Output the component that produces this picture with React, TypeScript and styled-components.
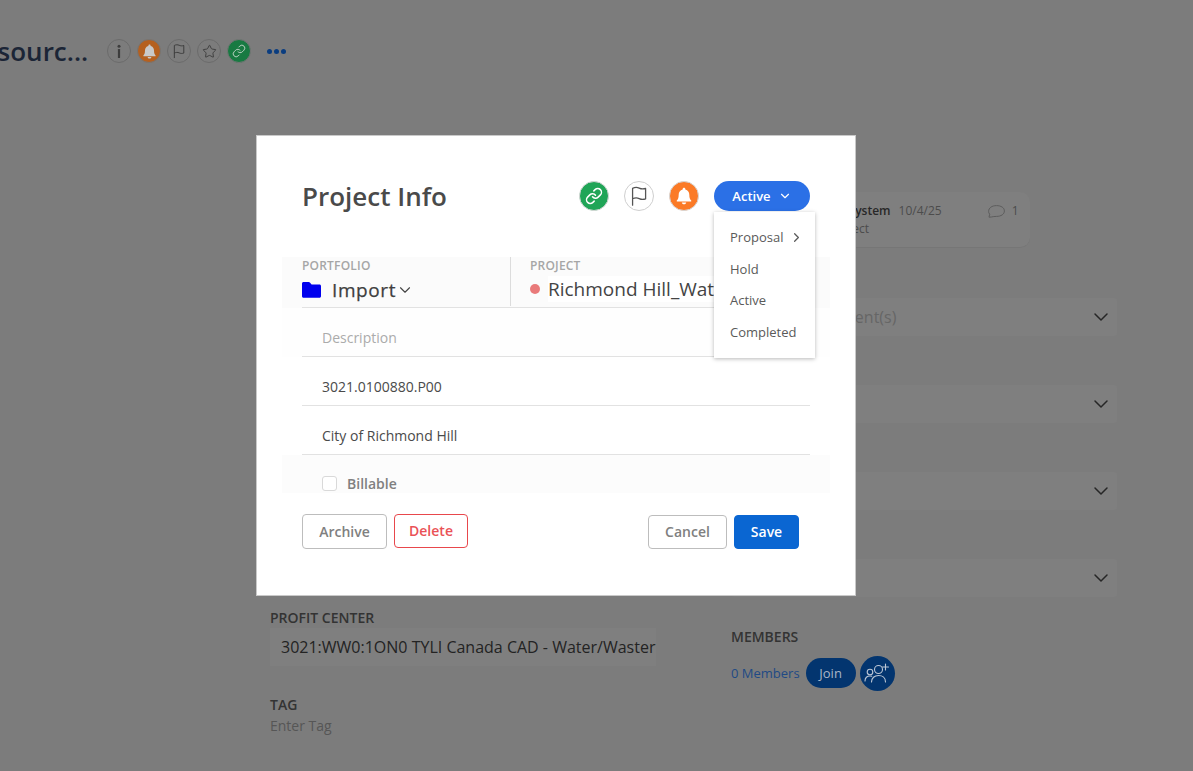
import React from "react";
import styled, { createGlobalStyle } from "styled-components";
import { ChevronDown, ChevronRight, Link as LinkIcon, Star } from "lucide-react";

const Global = createGlobalStyle`
  html, body { margin: 0; padding: 0; height: 100%; }
  body { font-family: "Open Sans", "Liberation Sans", sans-serif; background: #7c7c7c; overflow: hidden; }
  * { box-sizing: border-box; }
`;

const Page = styled.div`
  position: relative;
  width: 1193px;
  height: 771px;
  overflow: hidden;
  background: #7c7c7c;
`;

/* ---------- dimmed page behind the dialog ---------- */
const Header = styled.header`
  height: 102px;
  display: flex;
  align-items: center;
  gap: 6px;
`;
const PageTitle = styled.h1`
  margin: 0 13px 0 -34px;
  font-size: 26px;
  font-weight: 600;
  color: #1b2536;
  white-space: nowrap;
`;
const HeadIcon = styled.span<{ $bg?: string; $fg?: string }>`
  width: 24px;
  height: 24px;
  border-radius: 50%;
  display: flex;
  align-items: center;
  justify-content: center;
  background: ${(p) => p.$bg ?? "transparent"};
  border: 1px solid ${(p) => (p.$bg ? "#757575" : "#6b6b6b")};
  color: ${(p) => p.$fg ?? "#3d3d3d"};
  flex: none;
`;
const Dots = styled.span`
  display: flex;
  gap: 2px;
  margin-left: 10px;
  & i { width: 5px; height: 5px; border-radius: 50%; background: #0a3d80; display: block; }
`;
const Columns = styled.main`
  display: flex;
  gap: 75px;
  padding-left: 270px;
`;
const LeftCol = styled.section`
  width: 386px;
  padding-top: 507px;
`;
const RightCol = styled.section`
  width: 386px;
  padding-top: 90px;
`;
const FieldLabel = styled.div`
  font-size: 14px;
  line-height: 18px;
  font-weight: 600;
  color: #333;
`;
const ValueBox = styled.div`
  margin-top: 1px;
  height: 38px;
  padding: 0 1px 0 11px;
  background: #7f7f7f;
  color: #232323;
  font-size: 16px;
  line-height: 38px;
  white-space: nowrap;
  overflow: hidden;
`;
const TagLabel = styled(FieldLabel)`
  margin-top: 30px;
`;
const TagHint = styled.div`
  margin-top: 1px;
  font-size: 14px;
  line-height: 22px;
  color: #565656;
`;
const ActivityCard = styled.div`
  width: 299px;
  height: 56px;
  border-radius: 10px;
  background: #7f7f7f;
  border-bottom: 1px solid #767676;
  padding: 10px 0 0 99px;
  font-size: 12px;
  color: #4c4c4c;
`;
const CardTop = styled.div`
  display: flex;
  align-items: center;
  line-height: 18px;
  white-space: nowrap;
`;
const CardName = styled.b`
  font-weight: 600;
  color: #282828;
  margin: 0 8px 0 5px;
`;
const CommentCount = styled.span`
  margin-left: 46px;
  display: flex;
  align-items: center;
  gap: 7px;
`;
const CardBottom = styled.div`
  font-size: 12px;
  line-height: 18px;
`;
const Collapse = styled.div<{ $top: number }>`
  margin-top: ${(p) => p.$top}px;
  height: 38px;
  background: #7f7f7f;
  border-radius: 3px;
  padding: 0 4px 0 22px;
  display: flex;
  align-items: center;
  justify-content: space-between;
  font-size: 16px;
  color: #666;
  & svg { color: #262626; }
`;
const MembersBlock = styled.div`
  margin-top: 31px;
`;
const MembersRow = styled.div`
  margin-top: 9px;
  display: flex;
  align-items: center;
  height: 36px;
`;
const MembersLink = styled.span`
  font-size: 13px;
  color: #1f4a85;
  margin-right: 6px;
`;
const JoinPill = styled.span`
  width: 50px;
  height: 30px;
  border-radius: 15px;
  background: #03356f;
  color: #a9b6c8;
  font-size: 13px;
  display: flex;
  align-items: center;
  justify-content: center;
  margin-right: 4px;
`;
const AddMember = styled.span`
  width: 35px;
  height: 35px;
  border-radius: 50%;
  background: #03356f;
  color: #bcc7d6;
  display: flex;
  align-items: center;
  justify-content: center;
`;

/* ---------- dialog ---------- */
const Dialog = styled.div`
  position: absolute;
  left: 256px;
  top: 135px;
  width: 600px;
  height: 461px;
  background: #fff;
  border: 1px solid #c9c9c9;
  padding: 44px 0 0 0;
  display: flex;
  flex-direction: column;
`;
const DialogHead = styled.div`
  display: flex;
  align-items: center;
  height: 32px;
  padding: 0 45px;
`;
const DialogTitle = styled.h2`
  margin: 0 auto 0 0;
  font-size: 26px;
  font-weight: 600;
  color: #4a4a4a;
`;
const RoundIcon = styled.span<{ $bg?: string }>`
  width: 30px;
  height: 30px;
  border-radius: 50%;
  margin-right: 15px;
  background: ${(p) => p.$bg ?? "#fff"};
  border: 1px solid ${(p) => (p.$bg ? "#d6d6d6" : "#cfcfcf")};
  color: ${(p) => (p.$bg ? "#fff" : "#555")};
  display: flex;
  align-items: center;
  justify-content: center;
  flex: none;
`;
const StatusPill = styled.span`
  position: relative;
  width: 96px;
  height: 30px;
  border-radius: 15px;
  background: #2b70e6;
  color: #fff;
  font-size: 13px;
  font-weight: 600;
  display: flex;
  align-items: center;
  justify-content: center;
  gap: 7px;
`;
const StatusMenu = styled.ul`
  position: absolute;
  top: 31px;
  left: 0;
  width: 101px;
  height: 146px;
  margin: 0;
  padding: 9.4px 0 0 16px;
  list-style: none;
  background: #fff;
  box-shadow: 0 1px 4px rgba(0, 0, 0, 0.28);
  z-index: 3;
`;
const MenuItem = styled.li`
  height: 31.6px;
  display: flex;
  align-items: center;
  gap: 6px;
  font-size: 13px;
  font-weight: 400;
  color: #5a5a5a;
  white-space: nowrap;
`;
const FormBody = styled.div`
  margin-top: 45px;
  margin-left: 25px;
  width: 548px;
  height: 236px;
  overflow: hidden;
  display: flex;
  flex-direction: column;
`;
const Band = styled.div<{ $tint: string }>`
  background: ${(p) => p.$tint};
  padding: 0 20px;
`;
const SplitRow = styled.div`
  height: 51px;
  display: flex;
  border-bottom: 1px solid #e2e2e2;
`;
const SplitCell = styled.div<{ $w?: number; $divided?: boolean }>`
  flex: ${(p) => (p.$w ? `0 0 ${p.$w}px` : "1")};
  min-width: 0;
  overflow: hidden;
  padding-left: ${(p) => (p.$divided ? "19px" : "0")};
  border-right: ${(p) => (p.$divided ? "none" : "1px solid #dcdcdc")};
  margin-bottom: 1px;
`;
const MiniLabel = styled.div`
  font-size: 12px;
  line-height: 18px;
  font-weight: 600;
  color: #a6a6a6;
  letter-spacing: 0.2px;
`;
const PortfolioValue = styled.div`
  display: flex;
  align-items: center;
  height: 30px;
  font-size: 19px;
  font-weight: 400;
  letter-spacing: 0.6px;
  -webkit-text-stroke: 0.25px #3f3f3f;
  color: #3f3f3f;
  & svg.caret { color: #444; margin-left: 0; }
`;
const ProjectValue = styled.div`
  display: flex;
  align-items: center;
  height: 28px;
  font-size: 19px;
  color: #444;
  white-space: nowrap;
`;
const StatusDot = styled.span`
  width: 10px;
  height: 10px;
  border-radius: 50%;
  margin: 0 8px 0 0;
  background: #e97a7a;
  flex: none;
`;
const ProjectName = styled.span`
  background: #fff;
`;
const TextRow = styled.div<{ $muted?: boolean }>`
  height: 49px;
  padding: 10px 0 0 20px;
  display: flex;
  align-items: center;
  border-bottom: 1px solid #e2e2e2;
  font-size: 14px;
  color: ${(p) => (p.$muted ? "#ababab" : "#4a4a4a")};
`;
const CheckRow = styled.div`
  height: 38px;
  padding-left: 20px;
  display: flex;
  align-items: flex-end;
  gap: 10px;
  font-size: 14px;
  font-weight: 600;
  color: #808080;
`;
const CheckBox = styled.span`
  width: 15px;
  height: 15px;
  margin-bottom: 2px;
  background: #fff;
  border: 1px solid #d9d9d9;
  border-radius: 3px;
`;
const Footer = styled.div`
  margin-top: 21px;
  padding: 0 56px 0 45px;
  display: flex;
  align-items: flex-start;
  gap: 7px;
`;
const Btn = styled.span<{ $w: number; $kind?: "danger" | "primary" | "cancel" }>`
  width: ${(p) => p.$w}px;
  height: ${(p) => (p.$kind ? 34 : 35)}px;
  margin-top: ${(p) => (p.$kind === "primary" || p.$kind === "cancel" ? 1 : 0)}px;
  padding-bottom: ${(p) => (p.$kind ? 1 : 0)}px;
  border-radius: 4px;
  display: flex;
  align-items: center;
  justify-content: center;
  font-size: 14px;
  font-weight: 600;
  border: 1px solid
    ${(p) => (p.$kind === "danger" ? "#e8474c" : p.$kind === "primary" ? "#0a66d2" : "#bdbdbd")};
  background: ${(p) => (p.$kind === "primary" ? "#0a66d2" : "#fff")};
  color: ${(p) => (p.$kind === "danger" ? "#ea5257" : p.$kind === "primary" ? "#fff" : "#808080")};
`;
const FooterGap = styled.span`
  flex: 1;
`;

const BellGlyph = ({ size }: { size: number }) => (
  <svg width={size} height={size} viewBox="0 0 24 24" fill="currentColor">
    <path d="M12 2.2c-.9 0-1.6.7-1.6 1.6v.5C7.3 5 5.6 7.7 5.6 10.8c0 3.3-.6 4.9-2.2 6.7-.4.5-.1 1.2.6 1.2h16c.7 0 1-.7.6-1.2-1.6-1.8-2.2-3.4-2.2-6.7 0-3.1-1.7-5.8-4.8-6.5v-.5c0-.9-.7-1.6-1.6-1.6z" />
    <path d="M9.4 19.800h5.200c0 1.300-1.200 2.200-2.600 2.200s-2.600-.9-2.600-2.200z" />
  </svg>
);
const FlagGlyph = ({ size, weight }: { size: number; weight: number }) => (
  <svg width={size} height={size} viewBox="0 0 24 24" fill="none" stroke="currentColor" strokeWidth={weight} strokeLinejoin="round" strokeLinecap="round">
    <path d="M5 22V3.600c2.600-1.200 5-1.200 7.200-.2 2.200 1 4.400 1.200 7 .3v11.400c-2.600.9-4.800.7-7-.3-2.200-1-4.600-1-7.200.2" />
  </svg>
);
const InfoGlyph = () => (
  <svg width="16" height="16" viewBox="0 0 16 16" fill="currentColor">
    <circle cx="8" cy="3.200" r="1.500" />
    <rect x="6.900" y="6" width="2.200" height="9" rx="0.500" />
  </svg>
);
const FolderGlyph = () => (
  <svg width="19" height="16" viewBox="0 0 19 16" fill="#0000ee" style={{ marginRight: 11, flex: "none" }}>
    <path d="M1.500 0h5.200c.5 0 .9.2 1.200.5L9.600 2.400h7.900c.8 0 1.500.7 1.500 1.500v10.400c0 .8-.7 1.500-1.500 1.500h-16C.7 15.800 0 15.100 0 14.300V1.500C0 .7.700 0 1.500 0z" />
  </svg>
);
const BubbleGlyph = () => (
  <svg width="17" height="13" viewBox="0 0 17 13" fill="none" stroke="#5d5d5d" strokeWidth="1">
    <path d="M1 12.200l.7-3C.9 8.300.6 7.400.6 6.400.6 3 3.800.6 8.500.6c4.600 0 7.900 2.200 7.900 5.300 0 3.300-3.300 5.500-7.900 5.500-1.800 0-3.600.2-5.200.6z" />
  </svg>
);
const UsersPlus = () => (
  <svg width="26" height="24" viewBox="0 0 26 24" fill="none" stroke="currentColor" strokeWidth="1.100" strokeLinecap="round">
    <circle cx="14.500" cy="8.500" r="4" />
    <path d="M7.500 21c0-4 3-6.500 7-6.500s7 2.500 7 6.500" />
    <circle cx="6" cy="11" r="2.800" />
    <path d="M1 20c0-3.300 2-5 5-5 .6 0 1.200.1 1.700.3" />
    <path d="M21.500 3v6M18.500 6h6" />
  </svg>
);

export default function App() {
  return (
    <Page>
      <Global />
      <Header>
        <PageTitle>Resourc...</PageTitle>
        <HeadIcon><InfoGlyph /></HeadIcon>
        <HeadIcon $bg="#b5601f" $fg="#c9c9c9"><BellGlyph size={17} /></HeadIcon>
        <HeadIcon><FlagGlyph size={16} weight={1.500} /></HeadIcon>
        <HeadIcon><Star size={15} strokeWidth={1.500} /></HeadIcon>
        <HeadIcon $bg="#187a42" $fg="#b9cfc0"><LinkIcon size={14} strokeWidth={1.700} /></HeadIcon>
        <Dots><i /><i /><i /></Dots>
      </Header>
      <Columns>
        <LeftCol>
          <FieldLabel>PROFIT CENTER</FieldLabel>
          <ValueBox>3021:WW0:1ON0 TYLI Canada CAD - Water/Waster</ValueBox>
          <TagLabel>TAG</TagLabel>
          <TagHint>Enter Tag</TagHint>
        </LeftCol>
        <RightCol>
          <ActivityCard>
            <CardTop>
              <CardName>IT System</CardName>
              <span>10/4/25</span>
              <CommentCount><BubbleGlyph /> 1</CommentCount>
            </CardTop>
            <CardBottom>Project</CardBottom>
          </ActivityCard>
          <Collapse $top={50}>Select Document(s)<ChevronDown size={24} strokeWidth={1.500} /></Collapse>
          <Collapse $top={49}><span /><ChevronDown size={24} strokeWidth={1.500} /></Collapse>
          <Collapse $top={49}><span /><ChevronDown size={24} strokeWidth={1.500} /></Collapse>
          <Collapse $top={49}><span /><ChevronDown size={24} strokeWidth={1.500} /></Collapse>
          <MembersBlock>
            <FieldLabel>MEMBERS</FieldLabel>
            <MembersRow>
              <MembersLink>0 Members</MembersLink>
              <JoinPill>Join</JoinPill>
              <AddMember><UsersPlus /></AddMember>
            </MembersRow>
          </MembersBlock>
        </RightCol>
      </Columns>

      <Dialog>
        <DialogHead>
          <DialogTitle>Project Info</DialogTitle>
          <RoundIcon $bg="#20a557"><LinkIcon size={18} strokeWidth={2} /></RoundIcon>
          <RoundIcon><FlagGlyph size={22} weight={1.400} /></RoundIcon>
          <RoundIcon $bg="#fb7a26"><BellGlyph size={20} /></RoundIcon>
          <StatusPill>
            Active <ChevronDown size={14} />
            <StatusMenu>
              <MenuItem>Proposal <ChevronRight size={15} /></MenuItem>
              <MenuItem>Hold</MenuItem>
              <MenuItem>Active</MenuItem>
              <MenuItem>Completed</MenuItem>
            </StatusMenu>
          </StatusPill>
        </DialogHead>
        <FormBody>
          <Band $tint="#fbfbfb">
            <SplitRow>
              <SplitCell $w={209}>
                <MiniLabel>PORTFOLIO</MiniLabel>
                <PortfolioValue>
                  <FolderGlyph />
                  Import
                  <ChevronDown className="caret" size={18} strokeWidth={1.500} />
                </PortfolioValue>
              </SplitCell>
              <SplitCell $divided>
                <MiniLabel>PROJECT</MiniLabel>
                <ProjectValue>
                  <StatusDot />
                  <ProjectName>Richmond Hill_Water</ProjectName>
                </ProjectValue>
              </SplitCell>
            </SplitRow>
          </Band>
          <Band $tint="#fefefe">
            <TextRow $muted>Description</TextRow>
          </Band>
          <Band $tint="#fff">
            <TextRow>3021.0100880.P00</TextRow>
            <TextRow>City of Richmond Hill</TextRow>
          </Band>
          <Band $tint="#fcfcfc">
            <CheckRow><CheckBox />Billable</CheckRow>
          </Band>
        </FormBody>
        <Footer>
          <Btn $w={85}>Archive</Btn>
          <Btn $w={74} $kind="danger">Delete</Btn>
          <FooterGap />
          <Btn $w={79} $kind="cancel">Cancel</Btn>
          <Btn $w={65} $kind="primary">Save</Btn>
        </Footer>
      </Dialog>
    </Page>
  );
}
